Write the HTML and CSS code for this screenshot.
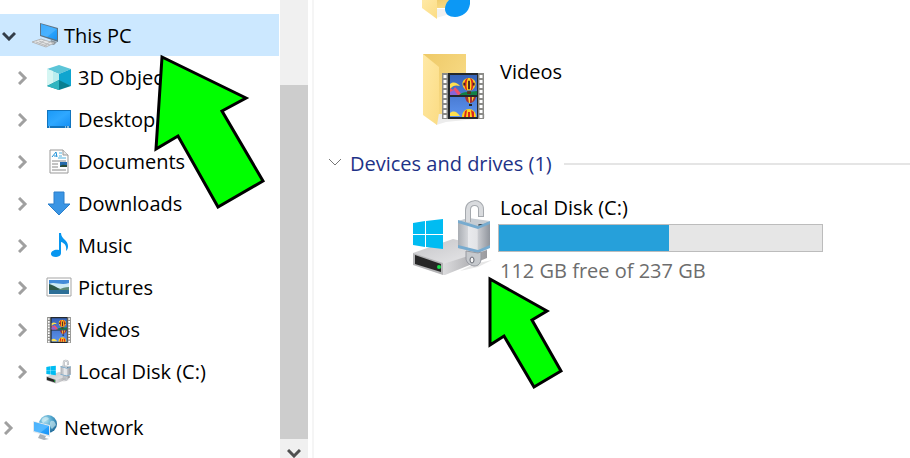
FILE: index.html
```html
<!DOCTYPE html>
<html lang="en">
<head>
    <meta charset="UTF-8">
    <meta name="viewport" content="width=device-width, initial-scale=1.0">
    <title>This PC</title>
    <link rel="stylesheet" href="styles.css">
</head>
<body>
    <!-- shared icons -->
    <svg class="defs" width="0" height="0" aria-hidden="true">
        <defs>
            <linearGradient id="blue" x1="0" y1="0" x2="1" y2="1">
                <stop offset="0" stop-color="#1b9af7"/><stop offset=".5" stop-color="#2fa8ff"/><stop offset="1" stop-color="#1590f5"/>
            </linearGradient>
            <linearGradient id="folderBack" x1="0" y1="0" x2="1" y2="1">
                <stop offset="0" stop-color="#eec967"/><stop offset="1" stop-color="#fbe08f"/>
            </linearGradient>
            <linearGradient id="folderFront" x1="0" y1="0" x2="1" y2="1">
                <stop offset="0" stop-color="#ffe9a6"/><stop offset="1" stop-color="#fbdc84"/>
            </linearGradient>
            <linearGradient id="metal" x1="0" y1="0" x2="1" y2="0">
                <stop offset="0" stop-color="#a9adb3"/><stop offset=".3" stop-color="#d3d5d9"/><stop offset=".32" stop-color="#e9eaed"/><stop offset=".6" stop-color="#e2e3e6"/><stop offset=".63" stop-color="#c9cbd0"/><stop offset="1" stop-color="#8f949c"/>
            </linearGradient>
            <linearGradient id="diskTop" x1="0" y1="0" x2="1" y2="1">
                <stop offset="0" stop-color="#c4c4c7"/><stop offset="1" stop-color="#ececee"/>
            </linearGradient>
            <linearGradient id="diskSide" x1="0" y1="0" x2="1" y2="0">
                <stop offset="0" stop-color="#dcdcde"/><stop offset="1" stop-color="#9a9a9e"/>
            </linearGradient>
            <linearGradient id="sky" x1="0" y1="0" x2="0" y2="1">
                <stop offset="0" stop-color="#3763b8"/><stop offset="1" stop-color="#5c93ee"/>
            </linearGradient>
            <radialGradient id="globe" cx=".35" cy=".3" r=".8">
                <stop offset="0" stop-color="#b6e4f2"/><stop offset=".5" stop-color="#4da3cc"/><stop offset="1" stop-color="#1c6290"/>
            </radialGradient>
        </defs>

        <symbol id="balloon" viewBox="0 0 14 17">
            <path d="M7 0C3 0 0 3 0 6c0 3 2 5 4 7h6c2-2 4-4 4-7 0-3-3-6-7-6z" fill="#ffd21c"/>
            <path d="M4 1C2 3 1 8 4 13h1C4 8 4 4 6 0zM10 1c2 2 3 7 0 12H9c1-5 1-9-1-13z" fill="#d8281e"/>
            <path d="M6 3h2v9H6zM1 5h2v3H1zM11 5h2v3h-2z" fill="#40202a"/>
            <path d="M5 14h4v3H5z" fill="#5a3218"/>
        </symbol>

        <symbol id="film" viewBox="0 0 42 46">
            <path d="M0 0h42v46H0z" fill="#8b8b88"/>
            <path d="M6 0h30v46H6z" fill="#24282c"/>
            <path d="M3 2v44M39 2v44" stroke="#fff" stroke-width="3" stroke-dasharray="3 2"/>
            <path d="M8 2h27v20H8zM8 24h27v20H8z" fill="url(#sky)"/>
            <path d="M8 11c4-3 7-1 10 2-4-1-7-1-10 3z" fill="#ffe04d"/>
            <path d="M8 15l3 2 2-3 3 3 4 5H8z" fill="#f0526a"/>
            <path d="M8 19l4-2 4 5H8z" fill="#8a64d8"/>
            <path d="M17 22c4-4 12-3 18-4v4z" fill="#128045"/>
            <use href="#balloon" x="20" y="5" width="14" height="16"/>
            <path d="M23 24h11c-1 4-3 5-5 6h-2c-2-1-3-2-4-6z" fill="#a63032"/>
            <path d="M26 24h2v6h-1zM30 24h2l-2 5z" fill="#f3ce32"/>
            <path d="M27 31h3v2h-3z" fill="#222"/>
            <path d="M8 40c4-3 7-1 10 3H8z" fill="#ffe04d"/>
            <path d="M20 44c0-5 3-8 7-8s7 3 7 8z" fill="#ffd21c"/>
            <path d="M23 38l2-1-1 7h-2zM29 37l3 2v5h-2zM26 39h2v5h-2z" fill="#d8281e"/>
        </symbol>

        <symbol id="drive" viewBox="0 0 82 78">
            <path d="M62 64l18-4-14 7-18 4z" fill="#e6e6e6"/>
            <path d="M1 53l40-14 34 8v6L31 66z" fill="url(#diskTop)"/>
            <path d="M31 64l44-14v8L33 75h-2z" fill="url(#diskSide)"/>
            <path d="M1 53l30 10v12L1 65z" fill="#b4b4b6"/>
            <path d="M3 55l26 9v8L3 64z" fill="#262626"/>
            <circle cx="27" cy="67" r="2" fill="#19e04a"/>
            <path d="M1 23l12-2v13H1zM14 21l17-2v15H14zM1 35h12v12L1 45zM14 35h17v14l-17-2z" fill="#00bcf2"/>
            <path d="M46 22l10-4 22 4v24l-12 6-20-4z" fill="url(#metal)"/>
            <path d="M46 21l10-3 22 3-12 6z" fill="#c6ccd2"/>
            <ellipse cx="69" cy="25" rx="3" ry="1" fill="#333a42"/>
            <path d="M46 20l20 6 12-5v3l-12 5-20-6zM46 45l20 5 12-5v3l-12 5-20-5z" fill="#77abcf"/>
            <path d="M56 22V10c0-9 13-9 13-1v8" fill="none" stroke="#a5a9ae" stroke-width="6"/>
            <path d="M56 22V10c0-9 13-9 13-1v7" fill="none" stroke="#d9dbde" stroke-width="4"/>
            <path d="M54 51l12 2 3-1v6c0 6-3 8-7 8-5-1-8-4-8-8z" fill="#c6c9cd" stroke="#9699a0"/>
            <ellipse cx="60" cy="60" rx="2" ry="3" fill="#f4f4f4" stroke="#666b73"/>
        </symbol>

        <symbol id="chevron" viewBox="0 0 10 14">
            <path d="M1 1l6 6-6 6" fill="none" stroke="#a0a0a0" stroke-width="3"/>
        </symbol>
    </svg>

    <div class="explorer">
        <nav class="sidebar">
            <ul class="tree">
                <li class="row selected">
                    <button class="toggle" aria-label="Collapse This PC"><svg width="14" height="10" viewBox="0 0 14 10"><path d="M1 2l6 6 6-6" fill="none" stroke="#333d48" stroke-width="3"/></svg></button>
                    <a href="#">
                        <svg class="icon" viewBox="0 0 26 26">
                            <path d="M8 0l18 5v14L8 13z" fill="#5f7484"/>
                            <path d="M9 1l16 5v11L9 12z" fill="url(#blue)"/>
                            <path d="M9 1l16 5-10 8-6-2z" fill="#62bcff" opacity=".5"/>
                            <path d="M19 17l-2 4 5 1 3-3z" fill="#8d979f"/>
                            <path d="M0 19l9-3 13 4-8 4z" fill="#e6e7e8" stroke="#b4b6b8"/>
                            <path d="M4 19l11 4M7 18l11 4M7 21l6-4M12 23l6-4" stroke="#b9bbbd" fill="none"/>
                        </svg>
                        This PC
                    </a>
                </li>
                <li class="row child">
                    <button class="toggle" aria-label="Expand 3D Objects"><svg width="10" height="14"><use href="#chevron"/></svg></button>
                    <a href="#">
                        <svg class="icon" viewBox="0 0 26 26">
                            <path d="M1 4l12-4 12 4-12 5z" fill="#5cc5d8"/>
                            <path d="M1 4l12 5v10L1 21z" fill="#b9edee"/>
                            <path d="M13 9l12-5v17l-12-2z" fill="#0fa5cf"/>
                            <path d="M1 4l6 2v14l-6 1z" fill="#d5f6f3"/>
                            <path d="M1 21l12-6 12 6-12 4z" fill="#087f91"/>
                            <path d="M1 21l12-6v10z" fill="#2fb5c0"/>
                        </svg>
                        3D Objects
                    </a>
                </li>
                <li class="row child">
                    <button class="toggle" aria-label="Expand Desktop"><svg width="10" height="14"><use href="#chevron"/></svg></button>
                    <a href="#">
                        <svg class="icon" viewBox="0 0 26 26">
                            <path d="M1 3h24v18H1z" fill="#1274bd"/>
                            <path d="M2 4h22v15H2z" fill="url(#blue)"/>
                            <path d="M3 20h1M19 20h1M21 20h2" stroke="#fff"/>
                        </svg>
                        Desktop
                    </a>
                </li>
                <li class="row child">
                    <button class="toggle" aria-label="Expand Documents"><svg width="10" height="14"><use href="#chevron"/></svg></button>
                    <a href="#">
                        <svg class="icon" viewBox="0 0 26 26">
                            <path d="M4 1h13l5 5v18H4z" fill="#fdfdfd" stroke="#999"/>
                            <path d="M17 1v5h5" fill="#e8e8e8" stroke="#999"/>
                            <path d="M6 8l4-5 1 5M8 7h3" fill="none" stroke="#1e90d8"/>
                            <path d="M13 4h3M13 7h3M12 9h8" stroke="#50b3e2"/>
                            <path d="M6 12h14M6 15h6M6 18h6M6 21h14" stroke="#888"/>
                            <path d="M14 13h7v5h-7z" fill="#2469ab"/>
                            <path d="M14 17c3-2 4-1 7-1v2h-7z" fill="#284b36"/>
                        </svg>
                        Documents
                    </a>
                </li>
                <li class="row child">
                    <button class="toggle" aria-label="Expand Downloads"><svg width="10" height="14"><use href="#chevron"/></svg></button>
                    <a href="#">
                        <svg class="icon" viewBox="0 0 26 26">
                            <path d="M8 1h10v12h6L13 24 2 13h6z" fill="#3a95e4" stroke="#2a7fcb"/>
                        </svg>
                        Downloads
                    </a>
                </li>
                <li class="row child">
                    <button class="toggle" aria-label="Expand Music"><svg width="10" height="14"><use href="#chevron"/></svg></button>
                    <a href="#">
                        <svg class="icon" viewBox="0 0 26 26">
                            <path d="M13 0h2c0 6 7 7 7 13 0 3-1 4-2 5 1-6-2-8-5-9v11c0 3-3 4-5 4-3 0-5-1-5-3 0-3 4-5 8-4z" fill="#0796f0"/>
                        </svg>
                        Music
                    </a>
                </li>
                <li class="row child">
                    <button class="toggle" aria-label="Expand Pictures"><svg width="10" height="14"><use href="#chevron"/></svg></button>
                    <a href="#">
                        <svg class="icon" viewBox="0 0 26 26">
                            <path d="M1 3h24v18H1z" fill="#fff" stroke="#a5a5a5"/>
                            <path d="M3 5h20v14H3z" fill="#428bd8"/>
                            <path d="M3 9c5-3 12 2 20-1v6H3z" fill="#cceaf5"/>
                            <path d="M3 9c5 1 9 5 15 6H3z" fill="#2e5948"/>
                            <path d="M12 15c4-2 7-3 11-3v4z" fill="#5d8b78"/>
                            <path d="M3 15h20v4H3z" fill="#2d6f97"/>
                        </svg>
                        Pictures
                    </a>
                </li>
                <li class="row child">
                    <button class="toggle" aria-label="Expand Videos"><svg width="10" height="14"><use href="#chevron"/></svg></button>
                    <a href="#">
                        <svg class="icon"><use href="#film"/></svg>
                        Videos
                    </a>
                </li>
                <li class="row child">
                    <button class="toggle" aria-label="Expand Local Disk"><svg width="10" height="14"><use href="#chevron"/></svg></button>
                    <a href="#">
                        <svg class="icon"><use href="#drive"/></svg>
                        Local Disk (C:)
                    </a>
                </li>
                <li class="row network">
                    <button class="toggle" aria-label="Expand Network"><svg width="10" height="14"><use href="#chevron"/></svg></button>
                    <a href="#">
                        <svg class="icon" viewBox="0 0 26 26">
                            <circle cx="16" cy="9" r="9" fill="url(#globe)"/>
                            <path d="M10 4c3-3 6-2 7 0-2 2-4 1-5 4-2 0-3-2-2-4zM19 6c3-1 4 1 5 4l-4 4c-2-2-3-6-1-8z" fill="#d8f0f4" opacity=".6"/>
                            <path d="M1 6l17 4v12L1 17z" fill="#e0e8ee"/>
                            <path d="M2 7l15 4v9L2 16z" fill="url(#blue)"/>
                            <path d="M2 7l15 4-9 7-6-2z" fill="#7acaff" opacity=".5"/>
                            <path d="M8 19l6 2-1 2 4 1-5 1-6-2z" fill="#a9b2ba"/>
                        </svg>
                        Network
                    </a>
                </li>
            </ul>
        </nav>

        <div class="scrollbar">
            <div class="thumb"></div>
            <button class="scroll-down" aria-label="Scroll down"><svg width="14" height="9" viewBox="0 0 14 9"><path d="M1 1l6 6 6-6" fill="none" stroke="#505050" stroke-width="3"/></svg></button>
        </div>

        <main class="content">
            <div class="tile music">
                <svg width="72" height="20" viewBox="0 0 72 20">
                    <path d="M24 18l14-4 14-3v-2H24z" fill="#f1f1f1"/>
                    <path d="M10 0h43v8H24z" fill="url(#folderBack)"/>
                    <path d="M10 0h15v19L10 8z" fill="url(#folderFront)"/>
                    <path d="M37 0h21v4c-1 8-8 13-15 13-6 0-10-3-10-8 0-3 1-6 4-9z" fill="#0c98f5"/>
                </svg>
            </div>
            <div class="tile videos">
                <svg width="80" height="74" viewBox="0 0 80 74">
                    <path d="M24 73l10-3 39-4v-4H24z" fill="#ececec"/>
                    <path d="M11 2h43v60H11z" fill="url(#folderBack)"/>
                    <path d="M11 2l16 13v46l-2 12-14-10z" fill="url(#folderFront)"/>
                    <svg x="30" y="21" width="42" height="46"><use href="#film"/></svg>
                </svg>
                <span class="name">Videos</span>
            </div>

            <h2 class="group">
                <svg width="14" height="9" viewBox="0 0 14 9"><path d="M1 1l6 6 6-6" fill="none" stroke="#777"/></svg>
                Devices and drives (1)
            </h2>

            <div class="tile disk">
                <svg width="82" height="78"><use href="#drive"/></svg>
                <div class="info">
                    <label class="name" for="usage">Local Disk (C:)</label>
                    <progress id="usage" value="125" max="237"></progress>
                    <span class="free">112 GB free of 237 GB</span>
                </div>
            </div>
        </main>
    </div>

    <svg class="arrow arrow-pc" width="114" height="156" viewBox="0 0 114 156">
        <path d="M10 4l84 41-24 13 41 70-45 26-40-71-22 13z"/>
    </svg>
    <svg class="arrow arrow-disk" width="80" height="116" viewBox="0 0 80 116">
        <path d="M5 4l57 32-15 9 29 51-27 16-30-51-14 9z"/>
    </svg>
</body>
</html>
```
FILE: styles.css
```css
* {
    box-sizing: border-box;
}
body {
    margin: 0;
    background: #fff;
    color: #000;
    font-family: "Open Sans", "Segoe UI", sans-serif;
    font-size: 20px;
    line-height: 28px;
}
svg {
    display: block;
    flex-shrink: 0;
}
.defs {
    position: absolute;
}
button {
    padding: 0;
    border: 0;
    background: none;
}
.explorer {
    display: flex;
    min-height: 100vh;
}

/* navigation tree */
.sidebar {
    width: 280px;
    flex-shrink: 0;
    padding: 14px 1px 0 0;
}
.tree {
    margin: 0;
    padding: 0;
    list-style: none;
}
.row {
    display: flex;
    align-items: center;
    height: 42px;
    padding: 2px 0 0 2px;
}
.row.selected {
    background: #cce8ff;
}
.row.child {
    padding-left: 16px;
}
.row.network {
    margin-top: 14px;
}
.toggle {
    display: flex;
    width: 30px;
}
.toggle svg {
    margin-left: 2px;
}
.selected .toggle svg {
    margin-left: 0;
}
.row a {
    display: flex;
    align-items: center;
    gap: 6px;
    color: #000;
    text-decoration: none;
    white-space: nowrap;
}
.icon {
    width: 26px;
    height: 26px;
}

.scrollbar {
    display: flex;
    flex-direction: column;
    width: 28px;
    flex-shrink: 0;
    padding-top: 85px;
    background: #f0f0f0;
}
.thumb {
    flex: 1;
    background: #cdcdcd;
}
.scroll-down {
    display: flex;
    justify-content: center;
    align-items: flex-end;
    height: 19px;
}

/* right pane */
.content {
    flex: 1;
    min-width: 0;
    margin-left: 4px;
    border-left: 2px solid #f5f5f5;
}
.tile {
    display: flex;
    padding-left: 98px;
}
.videos {
    margin-top: 32px;
}
.videos .name {
    margin: 6px 0 0 8px;
}
.group {
    display: flex;
    align-items: center;
    gap: 8px;
    margin: 24px 0 16px;
    padding-left: 14px;
    color: #1e3287;
    font-size: 20px;
    font-weight: 400;
}
.group::after {
    content: "";
    flex: 1;
    height: 2px;
    margin-left: 4px;
    background: #e5e5e5;
}
.group svg {
    margin-bottom: 4px;
}
.disk svg {
    margin-top: 6px;
}
.info {
    display: flex;
    flex-direction: column;
    flex: 1;
    max-width: 329px;
    padding-left: 4px;
}
.info .name,
.free {
    padding-left: 2px;
}
.free {
    margin-top: 5px;
    color: #6d6d6d;
}
progress {
    appearance: none;
    width: 100%;
    height: 28px;
    margin-top: 2px;
    border: 1px solid #bcbcbc;
    background: #e6e6e6;
}
progress::-webkit-progress-bar {
    background: #e6e6e6;
}
progress::-webkit-progress-value {
    background: #26a0da;
}

/* pointers over the window */
.arrow {
    position: absolute;
    fill: #0f0;
    stroke: #000;
    stroke-width: 3;
}
.arrow-pc {
    left: 152px;
    top: 53px;
}
.arrow-disk {
    left: 485px;
    top: 275px;
}
```
